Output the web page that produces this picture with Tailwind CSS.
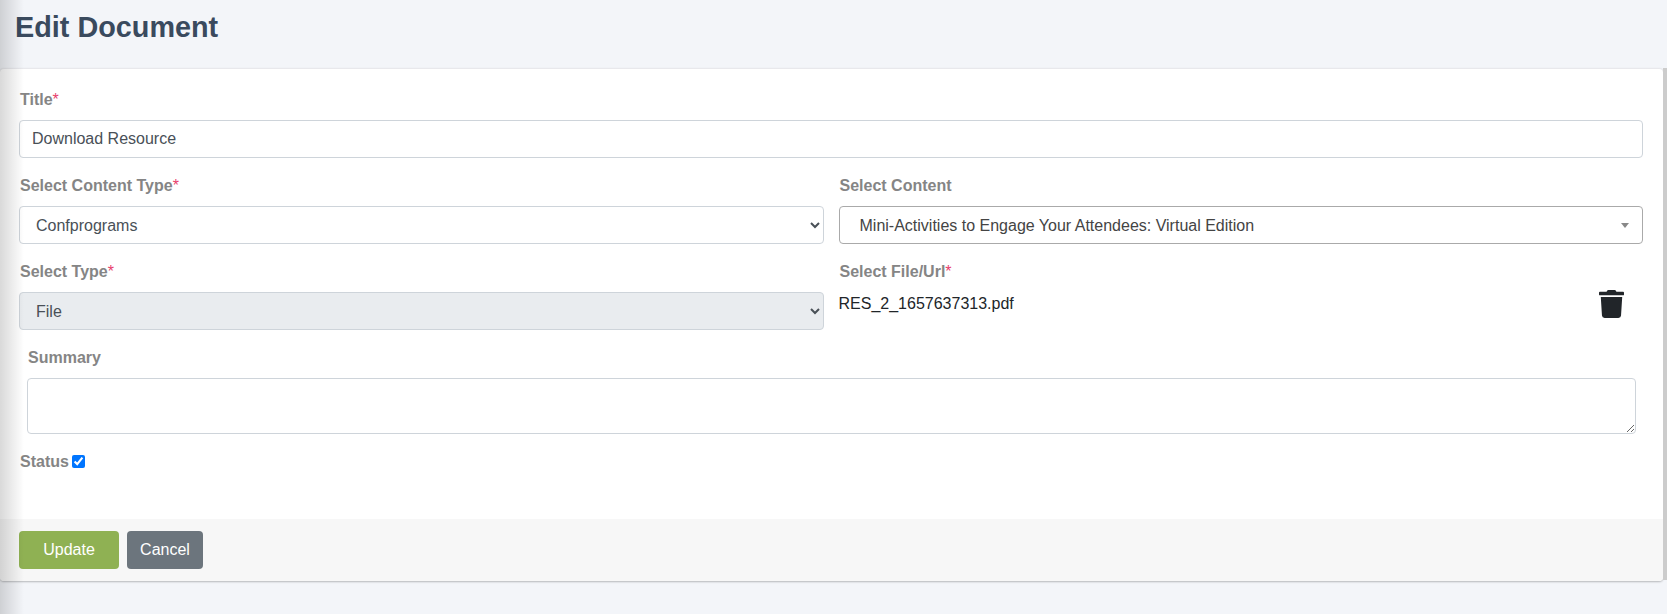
<!DOCTYPE html>
<html>
<head>
<meta charset="utf-8">
<title>Edit Document</title>
<script src="https://cdn.jsdelivr.net/npm/@tailwindcss/browser@4"></script>
</head>
<body class="bg-[#f3f5f9] font-['Liberation_Sans',Arial,sans-serif] overflow-hidden">
<div class="relative h-[614px] w-[1667px] overflow-hidden">
    <!-- Sidebar shadow -->
    <div class="absolute left-0 top-0 bottom-0 w-[24px] bg-gradient-to-r from-black/15 to-transparent z-10"></div>

    <!-- Header -->
    <header class="h-[68px] pl-[15px] pt-[9px]">
        <h1 class="text-[28.8px] leading-[36px] font-bold text-[#3a4a5e]">Edit Document</h1>
    </header>

    <!-- Card -->
    <div class="w-[1663px] h-[513px] bg-white rounded-[4px] border-t border-[#e8e8ec] shadow-[0_1px_2px_rgba(0,0,0,0.25)] flex flex-col">
        <div class="flex-1 pl-[19px] pr-[20px] pt-[22px]">
            <!-- Title -->
            <label class="block pl-[1px] text-[16px] leading-[18px] font-bold text-[#858585]">Title<span class="font-normal text-[#e83e6c]">*</span></label>
            <input type="text" value="Download Resource" class="mt-[11px] block w-full h-[38px] px-[12px] border border-[#ced4da] rounded-[4px] text-[16px] text-[#495057] bg-white">

            <!-- Content Type / Content -->
            <div class="grid grid-cols-2 gap-x-[15px] mt-[19px]">
                <div>
                    <label class="block pl-[1px] text-[16px] leading-[18px] font-bold text-[#858585]">Select Content Type<span class="font-normal text-[#e83e6c]">*</span></label>
                    <select class="mt-[11px] block w-full h-[38px] pl-[12px] pr-[2px] border border-[#ced4da] rounded-[4px] text-[16px] text-[#495057] bg-white appearance-auto">
                        <option>Confprograms</option>
                    </select>
                </div>
                <div>
                    <label class="block pl-[1px] text-[16px] leading-[18px] font-bold text-[#858585]">Select Content</label>
                    <div class="relative mt-[11px] h-[38px] border border-[#aaaaaa] rounded-[4px] pl-[20px] pt-[1px] text-[16px] leading-[36px] text-[#444444]">
                        Mini-Activities to Engage Your Attendees: Virtual Edition
                        <span class="absolute right-[13px] top-[16px] border-x-[4px] border-t-[5px] border-x-transparent border-t-[#888888]"></span>
                    </div>
                </div>
            </div>

            <!-- Type / File -->
            <div class="grid grid-cols-2 gap-x-[15px] mt-[19px]">
                <div>
                    <label class="block pl-[1px] text-[16px] leading-[18px] font-bold text-[#858585]">Select Type<span class="font-normal text-[#e83e6c]">*</span></label>
                    <select disabled class="mt-[11px] block w-full h-[38px] pl-[12px] pr-[2px] border border-[#ced4da] rounded-[4px] text-[16px] text-[#495057] bg-[#e9ecef] opacity-100 appearance-auto">
                        <option>File</option>
                    </select>
                </div>
                <div>
                    <label class="block pl-[1px] text-[16px] leading-[18px] font-bold text-[#858585]">Select File/Url<span class="font-normal text-[#e83e6c]">*</span></label>
                    <div class="flex items-start justify-between mt-[9px] pr-[19px]">
                        <span class="mt-[2px] text-[16px] leading-[24px] text-[#212529]">RES_2_1657637313.pdf</span>
                        <svg class="w-[25px] h-[28px]" viewBox="0 0 448 512" preserveAspectRatio="none" fill="#212529">
                            <path d="M432 32H312l-9.400-18.700A24 24 0 0 0 281.100 0H166.800a23.700 23.700 0 0 0-21.400 13.300L136 32H16A16 16 0 0 0 0 48v32a16 16 0 0 0 16 16h416a16 16 0 0 0 16-16V48a16 16 0 0 0-16-16zM53.200 467a48 48 0 0 0 47.900 45h245.800a48 48 0 0 0 47.900-45L416 128H32z"/>
                        </svg>
                    </div>
                </div>
            </div>

            <!-- Summary -->
            <div class="mt-[19px] pl-[8px] pr-[7px]">
                <label class="block pl-[1px] text-[16px] leading-[18px] font-bold text-[#858585]">Summary</label>
                <textarea class="mt-[11px] block w-full h-[56px] border border-[#ced4da] rounded-[4px] bg-white"></textarea>
            </div>

            <!-- Status -->
            <div class="flex items-center mt-[19px] pl-[1px]">
                <label class="text-[16px] leading-[18px] font-bold text-[#858585]">Status</label>
                <input type="checkbox" checked class="ml-[3px] mb-[1px] w-[13px] h-[13px] appearance-auto accent-[#0075ff]">
            </div>
        </div>

        <!-- Footer -->
        <div class="h-[62px] bg-[#f7f7f7] rounded-b-[4px] pl-[19px] pt-[12px] flex gap-[8px] items-start">
            <button class="w-[100px] h-[38px] rounded-[4px] bg-[#8fb153] text-white text-[16px]">Update</button>
            <button class="w-[76px] h-[38px] rounded-[4px] bg-[#6c757d] text-white text-[16px]">Cancel</button>
        </div>
    </div>

    <!-- Right scrollbar strip -->
    <div class="absolute right-0 top-[68px] h-[512px] w-[4px] bg-[#cccccc]"></div>
</div>
</body>
</html>
